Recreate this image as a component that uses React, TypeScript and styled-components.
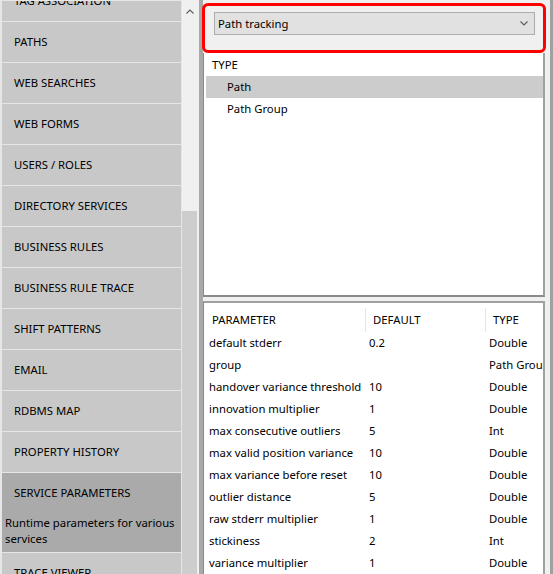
import React from 'react';
import styled, { createGlobalStyle } from 'styled-components';

const Global = createGlobalStyle`
  html, body { margin: 0; padding: 0; background: #f0f0f0; }
  body {
    font-family: "Noto Sans", "Open Sans", sans-serif;
    font-size: 11.3px;
    color: #000;
  }
  * { box-sizing: border-box; }
`;

const Frame = styled.div`
  display: flex;
  width: 553px;
  height: 574px;
  overflow: hidden;
  background: #f0f0f0;
`;

const Nav = styled.nav`
  width: 182px;
  flex: none;
  border-left: 2px solid #e6e6e6;
  border-top: 1px solid #e6e6e6;
  border-right: 1px solid #e6e6e6;
  background: #e6e6e6;
  overflow: hidden;
`;

const NavList = styled.ul`
  list-style: none;
  margin: -20px 0 0;
  padding: 0;
  display: flex;
  flex-direction: column;
  gap: 1px;
`;

const NavItem = styled.li<{ $active?: boolean }>`
  background: ${p => (p.$active ? '#aaaaaa' : '#c8c8c8')};
  padding-bottom: ${p => (p.$active ? '5px' : '0')};
`;

const NavTitle = styled.div`
  height: 40px;
  line-height: 40px;
  padding-left: 12px;
  white-space: nowrap;
`;

const NavDesc = styled.div`
  margin-top: 2px;
  padding: 0 4px 0 3px;
  line-height: 16px;
`;

const ScrollBar = styled.div`
  width: 17px;
  flex: none;
  display: flex;
  flex-direction: column;
  background: #f0f0f0;
`;

const ScrollButton = styled.div`
  height: 23px;
  display: flex;
  align-items: center;
  justify-content: center;
  padding-right: 2px;
`;

const ScrollThumb = styled.div`
  margin-top: 188px;
  width: 15px;
  flex: 1;
  background: #cdcdcd;
`;

const Splitter = styled.div`
  width: 4px;
  flex: none;
  background: #a9a9a9;
`;

const RightArea = styled.div`
  flex: 1;
  display: flex;
  flex-direction: column;
  padding-right: 5px;
  border-right: 3px solid #a0a0a0;
`;

const HighlightBox = styled.div`
  margin: 3px -1px 0 -1px;
  height: 50px;
  border: 3px solid #ff0000;
  border-radius: 6px;
  background: #f0f0f0;
  padding: 6px 8px 0 9px;
`;

const Combo = styled.div`
  height: 23px;
  display: flex;
  align-items: center;
  justify-content: space-between;
  padding: 0 6px 0 3px;
  background: #e1e1e1;
  border: 1px solid #adadad;
`;

const ListPanel = styled.div`
  height: 244px;
  flex: none;
  background: #fff;
  border-left: 1px solid #8a8a8a;
  border-right: 2px solid #a0a0a0;
  border-bottom: 2px solid #8a8a8a;
  padding: 1px 0 0 2px;
`;

const ListRow = styled.div<{ $indent?: boolean; $selected?: boolean }>`
  height: 22px;
  line-height: 22px;
  padding-left: ${p => (p.$indent ? '21px' : '6px')};
  background: ${p => (p.$selected ? '#cccccc' : 'transparent')};
`;

const TablePanel = styled.div`
  margin-top: 4px;
  flex: 1;
  background: #fff;
  border-top: 2px solid #a0a0a0;
  border-left: 1px solid #8a8a8a;
  border-right: 2px solid #a0a0a0;
  overflow: hidden;
`;

const Table = styled.div`
  display: grid;
  grid-template-columns: 161px 120px 1fr;
  margin-top: 5px;
`;

const HeadCell = styled.div<{ $first?: boolean }>`
  height: 24px;
  line-height: 24px;
  padding-left: ${p => (p.$first ? '8px' : '7px')};
  border-left: ${p => (p.$first ? 'none' : '1px solid #e5e5e5')};
  white-space: nowrap;
  overflow: hidden;
`;

const Cell = styled.div<{ $first?: boolean }>`
  height: 22px;
  line-height: 22px;
  padding-left: ${p => (p.$first ? '5px' : '4px')};
  white-space: nowrap;
  overflow: hidden;
`;

const Chevron = ({ up }: { up?: boolean }) => (
  <svg width="8" height="5" viewBox="0 0 8 5">
    <polyline
      points={up ? '0.5,4.5 4,1 7.5,4.5' : '0.5,0.5 4,4 7.5,0.5'}
      fill="none"
      stroke="#5a5a5a"
      strokeWidth="1.1"
    />
  </svg>
);

const navItems = [
  'TAG ASSOCIATION',
  'PATHS',
  'WEB SEARCHES',
  'WEB FORMS',
  'USERS / ROLES',
  'DIRECTORY SERVICES',
  'BUSINESS RULES',
  'BUSINESS RULE TRACE',
  'SHIFT PATTERNS',
  'EMAIL',
  'RDBMS MAP',
  'PROPERTY HISTORY',
  'SERVICE PARAMETERS',
  'TRACE VIEWER',
];

const params: [string, string, string][] = [
  ['default stderr', '0.2', 'Double'],
  ['group', '', 'Path Group'],
  ['handover variance threshold', '10', 'Double'],
  ['innovation multiplier', '1', 'Double'],
  ['max consecutive outliers', '5', 'Int'],
  ['max valid position variance', '10', 'Double'],
  ['max variance before reset', '10', 'Double'],
  ['outlier distance', '5', 'Double'],
  ['raw stderr multiplier', '1', 'Double'],
  ['stickiness', '2', 'Int'],
  ['variance multiplier', '1', 'Double'],
];

export default function App() {
  return (
    <>
      <Global />
      <Frame>
        <Nav>
          <NavList>
            {navItems.map(item => {
              const active = item === 'SERVICE PARAMETERS';
              return (
                <NavItem key={item} $active={active}>
                  <NavTitle>{item}</NavTitle>
                  {active && <NavDesc>Runtime parameters for various services</NavDesc>}
                </NavItem>
              );
            })}
          </NavList>
        </Nav>
        <ScrollBar>
          <ScrollButton>
            <Chevron up />
          </ScrollButton>
          <ScrollThumb />
        </ScrollBar>
        <Splitter />
        <RightArea>
          <HighlightBox>
            <Combo>
              <span>Path tracking</span>
              <Chevron />
            </Combo>
          </HighlightBox>
          <ListPanel>
            <ListRow>TYPE</ListRow>
            <ListRow $indent $selected>Path</ListRow>
            <ListRow $indent>Path Group</ListRow>
          </ListPanel>
          <TablePanel>
            <Table>
              <HeadCell $first>PARAMETER</HeadCell>
              <HeadCell>DEFAULT</HeadCell>
              <HeadCell>TYPE</HeadCell>
              {params.map(([name, def, type]) => (
                <React.Fragment key={name}>
                  <Cell $first>{name}</Cell>
                  <Cell>{def}</Cell>
                  <Cell>{type}</Cell>
                </React.Fragment>
              ))}
            </Table>
          </TablePanel>
        </RightArea>
      </Frame>
    </>
  );
}
